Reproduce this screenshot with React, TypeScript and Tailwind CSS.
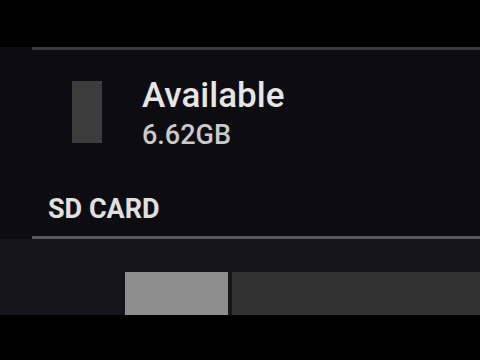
import React from "react";

const App = () => {
  return (
    <div className="w-[480px] h-[360px] bg-black flex flex-col overflow-hidden font-['Roboto',sans-serif]">
      <div className="h-[47px] shrink-0" />
      <div className="h-[268px] shrink-0 bg-[#0d0d11] flex flex-col">
        <div className="ml-[32px] h-[3px] bg-[#3b3b3d]" />
        <div className="flex pl-[72px] pt-[31px] h-[114px]">
          <div className="w-[30px] h-[62px] bg-[#3c3c3c]" />
          <div className="ml-[40px] -mt-[3px] flex flex-col">
            <span className="text-[35px] leading-none font-medium text-[#e6e6e6]">Available</span>
            <span className="mt-[9px] text-[27px] leading-none font-medium text-[#c9c9c9]">6.62GB</span>
          </div>
        </div>
        <div className="pl-[48px] mt-[32px] text-[27px] leading-none font-bold text-[#e0e0e0]">
          SD CARD
        </div>
        <div className="ml-[32px] mt-[13px] h-[3px] bg-[#58585a]" />
        <div className="flex-1 bg-[#15151b] pt-[33px]">
          <div className="ml-[125px] h-[43px] flex gap-[4px]">
            <div className="w-[103px] bg-[#8e8e8e]" />
            <div className="flex-1 bg-[#323232]" />
          </div>
        </div>
      </div>
    </div>
  );
};

export default App;
